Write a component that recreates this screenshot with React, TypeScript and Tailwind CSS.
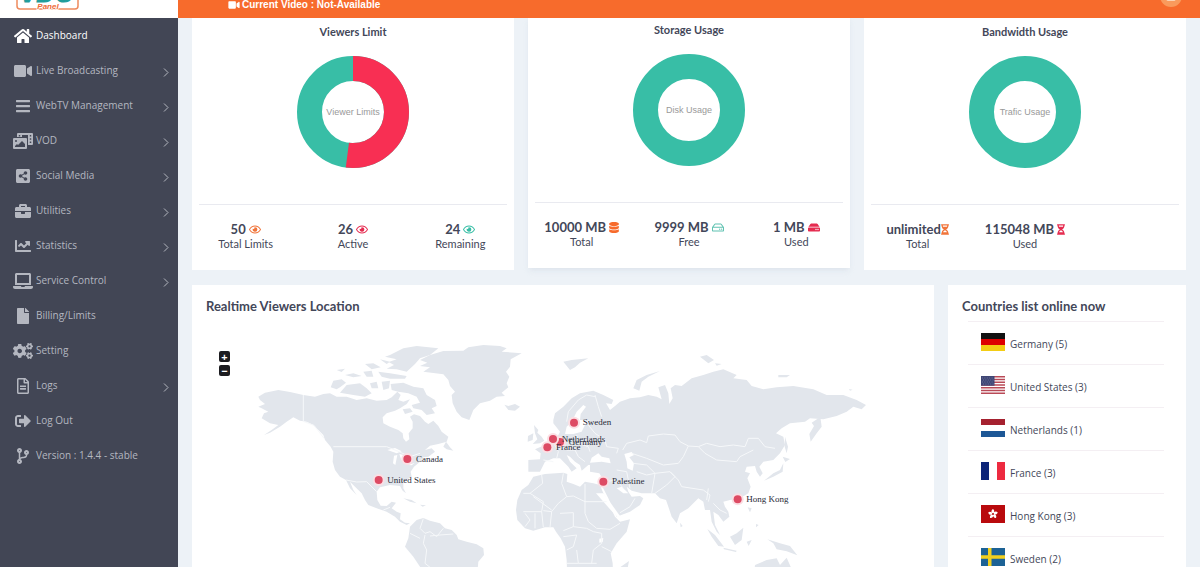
import {FC, ReactNode} from "react";
import {IconType} from "react-icons";
import {
    FaBars,
    FaBriefcase,
    FaChartLine,
    FaCodeBranch,
    FaCogs,
    FaDatabase,
    FaFile,
    FaHdd,
    FaHome,
    FaHourglassHalf,
    FaLaptop,
    FaPhotoVideo,
    FaRegEye,
    FaRegFileAlt,
    FaRegHdd,
    FaShareAltSquare,
    FaSignOutAlt,
    FaUser,
    FaVideo
} from "react-icons/fa";

interface MenuItem {
    label: string;
    icon: IconType;
    active?: boolean;
    sub?: boolean;
}

const menu: MenuItem[] = [
    {label: "Dashboard", icon: FaHome, active: true},
    {label: "Live Broadcasting", icon: FaVideo, sub: true},
    {label: "WebTV Management", icon: FaBars, sub: true},
    {label: "VOD", icon: FaPhotoVideo, sub: true},
    {label: "Social Media", icon: FaShareAltSquare, sub: true},
    {label: "Utilities", icon: FaBriefcase, sub: true},
    {label: "Statistics", icon: FaChartLine, sub: true},
    {label: "Service Control", icon: FaLaptop, sub: true},
    {label: "Billing/Limits", icon: FaFile},
    {label: "Setting", icon: FaCogs},
    {label: "Logs", icon: FaRegFileAlt, sub: true},
    {label: "Log Out", icon: FaSignOutAlt},
    {label: "Version : 1.4.4 - stable", icon: FaCodeBranch}
];

const Sidebar: FC = () => {
    return (
        <aside className="w-[178px] shrink-0 bg-[#424655]">
            <div className="flex h-[18px] items-end overflow-hidden bg-white pl-4">
                <svg width="63" height="34" viewBox="0 0 63 34" className="mb-2 shrink-0" aria-label="VDO Panel">
                    <rect x="1" y="1" width="61" height="32" rx="3" fill="#fff" stroke="#ee8a5e" strokeWidth="1.5"/>
                    <text x="31" y="26" textAnchor="middle" fontSize="25" fontWeight="900" fontStyle="italic" fill="#1f9d9b" stroke="#1f9d9b" strokeWidth="1.2" fontFamily="Liberation Sans, sans-serif">VDO</text>
                    <text x="32" y="33" textAnchor="middle" fontSize="8" fontWeight="700" fontStyle="italic" fill="#ee6a35" stroke="#fff" strokeWidth="1.5" paintOrder="stroke" fontFamily="Liberation Sans, sans-serif">Panel</text>
                </svg>
            </div>
            <nav>
                {menu.map(({label, icon: Icon, active, sub}) => (
                    <a
                        key={label}
                        href="#"
                        className={`flex h-[35px] items-center pr-[9px] pl-3 text-[10px] ${active ? "text-white" : "text-[#b4b7c0]"}`}
                    >
                        <Icon className="h-4 w-[22px] shrink-0"/>
                        <span className="ml-0.5 flex-1 whitespace-nowrap">{label}</span>
                        {sub && (
                            <svg width="6" height="9" viewBox="0 0 6 9" className="mt-[3px]" aria-hidden="true">
                                <path d="M1 .5 5 4.500 1 8.500" fill="none" stroke="currentColor"/>
                            </svg>
                        )}
                    </a>
                ))}
            </nav>
        </aside>
    )
}

interface DonutProps {
    label: string;
    used: number;
    total: number;
}

// outer radius 56, inner radius 31
const Donut: FC<DonutProps> = ({label, used, total}: DonutProps) => {
    const length = 2 * Math.PI * 43.5;
    const part = length * used / total;

    return (
        <svg width="112" height="112" viewBox="0 0 112 112" className="mx-auto">
            <circle cx="56" cy="56" r="43.5" fill="none" stroke="#38bea6" strokeWidth="25"/>
            {used > 0 && (
                <circle cx="56" cy="56" r="43.5" fill="none" stroke="#f82f53" strokeWidth="25" strokeDasharray={`${part} ${length}`} transform="rotate(-90 56 56)"/>
            )}
            <text x="56" y="59" textAnchor="middle" fontSize="9" fill="#999" fontFamily="Liberation Sans, Arial, sans-serif">{label}</text>
        </svg>
    )
}

interface StatProps {
    value: string;
    label: string;
    icon: ReactNode;
    tight?: boolean;
}

const Stat: FC<StatProps> = ({value, label, icon, tight}: StatProps) => {
    return (
        <div className="text-center font-[Lato,sans-serif] whitespace-nowrap">
            <div className={`flex items-center justify-center text-[13px] leading-4 font-bold ${tight ? "" : "gap-[3px]"}`}>
                {value}
                {icon}
            </div>
            <div className="text-[11px] leading-[14px]">{label}</div>
        </div>
    )
}

interface UsageCardProps extends DonutProps {
    title: string;
    raised?: boolean;
    children: ReactNode;
}

const UsageCard: FC<UsageCardProps> = ({title, raised, children, ...donut}: UsageCardProps) => {
    return (
        <section className={`bg-white pt-[7px] pb-[19px] ${raised ? "-translate-y-0.5 shadow-md shadow-slate-300/30" : ""}`}>
            <h2 className="mb-[17px] text-center font-[Lato,sans-serif] text-[11px] leading-[14px] font-bold">{title}</h2>
            <Donut {...donut}/>
            <div className="mx-[7px] mt-9 border-t border-[#e9eaf0]"/>
            <div className="mt-4 grid grid-cols-3">{children}</div>
        </section>
    )
}

interface Pin {
    name: string;
    x: number;
    y: number;
}

const pins: Pin[] = [
    {name: "Germany", x: 1110, y: 486},
    {name: "Netherlands", x: 1089, y: 477},
    {name: "France", x: 1072, y: 502},
    {name: "Sweden", x: 1152, y: 428},
    {name: "Canada", x: 652, y: 537},
    {name: "United States", x: 566, y: 600},
    {name: "Palestine", x: 1240, y: 605},
    {name: "Hong Kong", x: 1643, y: 658}
];

const WorldMap: FC = () => {
    return (
        <svg viewBox="6 150 2226 750" className="block w-full" role="img" aria-label="World map">
            <g fill="#e2e6ec">
                {/* North America */}
                <path d="M205 350 225 338 265 330 300 336 340 345 375 350 400 342 420 340 440 350 470 350 500 360 530 355 560 362 590 360 605 352 622 335 632 345 625 360 640 365 660 358 650 372 630 385 615 392 590 400 578 412 580 430 600 440 625 450 638 460 640 475 648 485 658 478 656 460 668 445 668 425 660 410 672 403 690 408 705 425 715 432 730 422 745 438 755 455 775 470 770 485 745 492 720 497 705 510 725 505 735 515 715 530 700 532 690 545 672 560 662 575 665 590 640 605 640 625 648 640 638 632 630 618 600 615 570 622 560 635 562 660 572 677 590 678 605 665 618 668 605 685 620 695 632 700 630 718 645 728 660 730 650 735 630 725 615 710 590 695 560 685 535 675 525 660 515 640 495 620 480 605 490 630 500 645 480 625 468 600 450 590 435 570 428 545 430 515 422 500 405 480 400 465 380 445 370 435 350 425 330 422 310 412 290 425 270 440 240 458 222 465 245 450 265 435 240 430 215 415 222 400 235 395 215 385 205 380 225 372 210 360Z"/>
                {/* Arctic islands */}
                <path d="M600 225 640 205 680 198 745 205 720 225 690 235 675 252 650 275 620 268 590 266 612 255 596 246 620 238 585 230ZM570 238 600 245 590 252ZM422 322 430 302 455 298 468 308 450 322 440 328ZM450 338 470 315 510 310 530 325 545 340 525 350 490 345ZM440 270 465 266 455 276ZM465 285 490 280 515 288 490 292ZM525 252 550 250 572 262 545 268ZM520 275 545 272 550 290 530 290ZM565 275 600 280 650 288 645 296 600 296 575 290ZM540 310 560 305 565 325 545 325ZM575 305 600 302 597 325 580 330ZM602 312 640 308 670 320 700 325 710 345 735 360 740 378 725 385 735 400 710 405 695 390 670 385 665 375 690 368 680 350 655 340 625 335 605 330ZM638 388 660 385 668 395 645 402Z"/>
                {/* Greenland, Iceland */}
                <path d="M690 240 720 225 760 213 820 212 835 202 880 195 930 198 950 205 935 215 995 220 962 238 960 260 948 275 958 290 950 310 955 322 935 338 945 348 920 350 900 362 870 370 850 390 838 420 815 412 800 395 788 370 785 345 795 335 780 318 775 300 760 283 700 275 720 262 690 258 712 248ZM943 374 955 378 975 372 990 380 975 392 955 390Z"/>
                <path d="M760 500 768 485 780 502 790 512 770 508ZM640 655 665 660 680 670 660 665ZM690 674 708 676 698 680Z"/>
                {/* South America */}
                <path d="M660 740 680 720 700 714 720 722 750 730 765 745 785 750 800 765 805 778 830 785 860 793 880 805 882 825 865 845 860 900 700 900 690 860 670 830 645 800 655 775Z"/>
                {/* Africa */}
                <path d="M1030 590 1065 582 1120 578 1132 582 1130 605 1150 612 1170 620 1185 605 1210 610 1230 615 1240 640 1255 670 1275 710 1290 725 1320 718 1310 755 1280 790 1262 820 1268 850 1270 900 1132 900 1130 840 1125 800 1112 775 1098 755 1090 742 1065 742 1030 752 1005 745 982 720 978 690 982 660 995 630 1015 615Z"/>
                {/* British Isles */}
                <path d="M1032 435 1045 450 1042 458 1055 470 1063 482 1050 490 1028 492 1042 478 1035 460ZM1014 468 1030 460 1028 480 1013 485Z"/>
                <g transform="translate(1110 0)">
                    {/* Eurasia */}
                    <path d="M-20 420-15 400 10 380 35 355 60 340 100 332 130 345 160 360 155 372 138 370 150 390 165 378 180 365 210 355 240 352 265 345 290 350 305 358 295 322 315 315 325 340 328 372 338 355 332 325 345 315 365 318 395 295 430 285 460 275 490 268 530 285 520 295 560 300 575 318 610 328 650 322 700 318 760 328 800 345 850 345 890 360 918 375 905 388 880 380 860 395 830 408 790 418 750 415 735 425 690 430 665 445 648 460 670 470 675 495 660 520 640 540 610 545 598 560 608 580 600 590 590 575 585 558 560 560 555 575 570 580 562 595 572 620 565 640 540 655 510 660 490 665 495 680 505 695 508 710 490 725 475 705 460 695 465 735 480 765 470 755 455 725 450 690 435 690 430 665 415 655 385 685 360 700 350 730 335 710 325 680 318 660 300 655 285 640 245 640 215 632 200 620 205 635 215 650 240 648 250 655 240 675 210 695 170 710 160 690 145 655 128 622 130 600 118 580 90 575 90 555 85 555 65 572 60 555 45 545 30 530 20 525 30 545 50 565 35 575 25 560 0 535-20 535-45 545-60 575-95 575-95 540-60 538-58 520-75 508-45 495-25 485-10 475 0 455-20 430Z"/>
                    {/* Kamchatka */}
                    <path d="M790 405 782 418 785 440 770 460 752 485 748 462 762 438 755 428 775 415Z"/>
                    <path d="M10 245 35 240 85 235 60 248 45 262 30 270ZM220 325 230 300 260 285 300 273 265 290 245 305 238 332ZM420 230 440 225 462 240 445 250ZM465 250 485 252 470 257ZM655 285 690 285 680 292 655 292ZM867 327 878 329 870 332ZM675 470 684 500 680 520 674 500ZM668 530 690 537 676 546ZM670 550 668 575 640 590 612 602 640 580 660 570ZM563 682 575 685 570 697ZM588 732 596 735 588 742ZM510 770 530 760 550 743 545 780 525 795ZM442 747 465 765 492 800 475 798 455 770ZM490 803 530 812 528 816 492 808ZM560 785 575 780 566 798ZM622 778 660 790 690 798 712 826 680 814 650 808 640 790ZM580 900 585 855 620 840 650 835 660 855 680 833 692 860 695 900ZM180 862 207 843 200 880 180 890ZM360 728 368 738 362 742Z"/>
                </g>
            </g>
            {/* inland water */}
            <g fill="#fff">
                <path d="M592 510 615 504 635 514 620 520ZM612 527 622 525 616 555 609 550ZM628 522 645 526 640 545 634 540ZM655 555 675 548 665 556Z"/>
                <path d="M1200 548 1205 533 1225 520 1235 530 1258 535 1262 550 1235 545ZM1303 522 1325 516 1332 525 1318 532 1332 550 1328 572 1312 565 1310 545ZM1218 640 1240 640 1252 655 1290 708 1283 712 1262 690ZM1280 625 1295 620 1315 640 1300 640ZM1145 425 1160 395 1180 375 1188 380 1172 402 1170 420 1200 422 1185 435 1175 455 1150 462 1125 462 1130 440Z"/>
                <path d="M1228 776 1240 774 1238 786 1228 788Z"/>
            </g>
            {/* country borders */}
            <g fill="none" stroke="#f6f8fa" strokeWidth="3">
                <path d="M340 345V424L372 436 402 475M430 500H590L620 512 660 530 690 520M468 600 500 606 530 605 560 635M580 690 600 682"/>
                <path d="M700 716 690 745 705 760 720 755 740 770 760 745M690 775 660 760M705 765 700 790 710 810 705 850 730 870M720 768 750 765 790 762"/>
                <path d="M1055 585 1058 610 1020 640 1060 665 1055 695 1000 695M1020 640 1000 640M1120 580 1115 610 1130 650 1105 670 1085 695 1060 692M1030 650 1085 690M1130 650 1150 648 1185 665V700L1195 725 1220 745 1260 748 1290 730M1185 612V665H1250M1085 695 1080 742M1055 695 1060 742M1110 700 1150 698 1150 740 1120 752M1035 700V745M1005 700 1020 720 1005 740M1150 740 1190 745 1210 755 1235 760 1235 790 1210 810 1205 850M1120 770 1160 765 1150 800 1130 810M1235 800 1265 815M1160 810 1165 850 1130 850M1165 850 1220 850"/>
                <path d="M1298 510 1310 490 1350 480 1370 488 1375 468 1420 462 1455 465 1470 485 1495 498 1525 500 1550 490 1590 500 1630 495 1665 500 1675 475 1705 475 1725 500 1755 505M1525 500 1545 520 1580 540 1640 545 1650 530 1690 510M1495 498 1480 530 1465 550 1420 555 1370 535 1325 520M1330 550 1370 555 1395 580 1370 585 1340 575M1395 580 1440 575 1465 600 1475 620 1540 630 1560 645 1555 665M1395 580 1385 640M1440 575 1455 590 1430 615 1395 640M1280 570 1310 575 1320 625M1245 605 1280 600 1300 625M1290 698 1320 680 1335 655M1570 670 1590 690 1610 700M1555 625 1550 660"/>
                <path d="M1130 425 1135 395 1165 360 1190 345 1215 350M1215 345 1225 380 1235 410M1195 435 1215 460 1245 480 1250 500 1285 505 1280 520M1160 465 1165 490 1195 500 1200 515M1120 480 1130 510 1155 510 1165 530 1185 545M1060 540 1090 545M1092 490 1105 515 1100 535M1190 500 1215 480"/>
            </g>
            {pins.map((pin) => (
                <g key={pin.name}>
                    <circle cx={pin.x} cy={pin.y} r="18" fill="#fbdfe4"/>
                    <circle cx={pin.x} cy={pin.y} r="12" fill="#dd4b64"/>
                    <text x={pin.x + 26} y={pin.y + 8} fontSize="27" fill="#292b38" fontFamily="Liberation Serif, Times New Roman, serif">{pin.name}</text>
                </g>
            ))}
        </svg>
    )
}

interface Country {
    name: string;
    count: number;
    flag: ReactNode;
}

// every flag is drawn on a 24 x 18 field
const countries: Country[] = [
    {
        name: "Germany",
        count: 5,
        flag: <><path fill="#111" d="M0 0h24v6H0z"/><path fill="#d00" d="M0 6h24v6H0z"/><path fill="#f3cd14" d="M0 12h24v6H0z"/></>
    },
    {
        name: "United States",
        count: 3,
        flag: <>
            <path fill="#fff" d="M0 0h24v18H0z"/>
            <path stroke="#b94a57" strokeWidth="1.4" d="M0 .7h24M0 3.500h24M0 6.200h24M0 9h24M0 11.800h24M0 14.500h24M0 17.300h24"/>
            <path fill="#3f4675" d="M0 0h13.500v9.700H0z"/>
            <path stroke="#7f84ab" strokeWidth=".7" strokeDasharray="1 1.400" d="M1 2h12M2 4h11M1 6h12M2 8h11"/>
        </>
    },
    {
        name: "Netherlands",
        count: 1,
        flag: <><path fill="#fff" d="M0 0h24v18H0z"/><path fill="#a5212f" d="M0 0h24v6H0z"/><path fill="#1d5796" d="M0 12h24v6H0z"/></>
    },
    {
        name: "France",
        count: 3,
        flag: <><path fill="#fff" d="M0 0h24v18H0z"/><path fill="#0c2478" d="M0 0h8v18H0z"/><path fill="#ed2a40" d="M16 0h8v18h-8z"/></>
    },
    {
        name: "Hong Kong",
        count: 3,
        flag: <>
            <path fill="#b90a0d" d="M0 0h24v18H0z"/>
            {[0, 72, 144, 216, 288].map((turn) => (
                <path key={turn} fill="#fff" d="M12 9C9.800 7.500 10 5 12 4c1.600 1 1.700 3.400 0 5z" transform={`rotate(${turn} 12 9)`}/>
            ))}
            <circle cx="12" cy="9" r="1" fill="#b90a0d"/>
        </>
    },
    {
        name: "Sweden",
        count: 2,
        flag: <><path fill="#1c6295" d="M0 0h24v18H0z"/><path fill="#f0cf1f" d="M7 0h3.500v18H7zM0 7.300h24v3.400H0z"/></>
    }
];

const App: FC = () => {
    return (
        <div className="flex h-screen overflow-hidden bg-[#edf2f7] font-['Open_Sans',sans-serif] text-[#434759]">
            <Sidebar/>
            <div className="min-w-0 flex-1">
                <header className="relative z-10 flex h-[18px] items-end justify-between overflow-hidden bg-[#f76b2c] pr-[18px] pl-[50px] text-white">
                    <div className="flex items-center gap-0.5 pb-[7px] font-['Liberation_Sans',Arial,sans-serif] text-[10px] leading-3 font-bold">
                        <FaVideo className="h-2.5 w-3"/>
                        Current Video : Not-Available
                    </div>
                    <div className="mb-[11px] flex size-[22px] shrink-0 items-center justify-center rounded-full bg-[#f99a5c]">
                        <FaUser className="size-2.5 text-[#fbd3b4]"/>
                    </div>
                </header>
                <main className="px-3.5">
                    <div className="grid grid-cols-3 gap-3.5">
                        <UsageCard title="Viewers Limit" label="Viewer Limits" used={26} total={50}>
                            <Stat value="50" label="Total Limits" icon={<FaRegEye className="h-[11px] w-3 text-[#f0743a]"/>}/>
                            <Stat value="26" label="Active" icon={<FaRegEye className="h-[11px] w-3 text-[#e52c50]"/>}/>
                            <Stat value="24" label="Remaining" icon={<FaRegEye className="h-[11px] w-3 text-[#38bea6]"/>}/>
                        </UsageCard>
                        <UsageCard title="Storage Usage" label="Disk Usage" used={1} total={10000} raised>
                            <Stat value="10000 MB" label="Total" icon={<FaDatabase className="h-[11px] w-2.5 text-[#f76b2c]"/>}/>
                            <Stat value="9999 MB" label="Free" icon={<FaRegHdd className="h-[11px] w-3 text-[#5fc2b1]"/>}/>
                            <Stat value="1 MB" label="Used" icon={<FaHdd className="h-[11px] w-3 text-[#e52c50]"/>}/>
                        </UsageCard>
                        <UsageCard title="Bandwidth Usage" label="Trafic Usage" used={0} total={1}>
                            <Stat value="unlimited" label="Total" tight icon={<FaHourglassHalf className="h-[11px] w-2 text-[#f0743a]"/>}/>
                            <Stat value="115048 MB" label="Used" icon={<FaHourglassHalf className="h-[11px] w-2 text-[#e52c50]"/>}/>
                        </UsageCard>
                    </div>
                    <div className="mt-[15px] grid grid-cols-[1fr_238px] gap-3.5">
                        <section className="relative bg-white pt-[11px]">
                            <h2 className="pl-3.5 font-[Lato,sans-serif] text-[13px] leading-5 font-bold">Realtime Viewers Location</h2>
                            <div className="absolute top-[66px] left-[27px] flex flex-col gap-[3px]">
                                <button aria-label="Zoom in" className="flex size-[11px] items-center justify-center rounded-xs bg-[#1c1c20] text-[11px] leading-none font-bold text-white">+</button>
                                <button aria-label="Zoom out" className="flex size-[11px] items-center justify-center rounded-xs bg-[#1c1c20] text-[11px] leading-none font-bold text-white">−</button>
                            </div>
                            <div className="pt-3.5">
                                <WorldMap/>
                            </div>
                        </section>
                        <section className="bg-white pt-[11px] pl-3.5">
                            <h2 className="font-[Lato,sans-serif] text-[13px] leading-5 font-bold">Countries list online now</h2>
                            <ul className="mt-[5px] mr-[22px] ml-1.5">
                                {countries.map((country) => (
                                    <li key={country.name} className="flex h-[43px] items-center border-t border-[#f4eff3] pb-0.5 pl-[13px] text-[10px]">
                                        <svg width="24" height="18" viewBox="0 0 24 18" className="mr-[5px]" aria-hidden="true">{country.flag}</svg>
                                        <span className="pt-1">{country.name} ({country.count})</span>
                                    </li>
                                ))}
                            </ul>
                        </section>
                    </div>
                </main>
            </div>
        </div>
    )
}

export default App;
